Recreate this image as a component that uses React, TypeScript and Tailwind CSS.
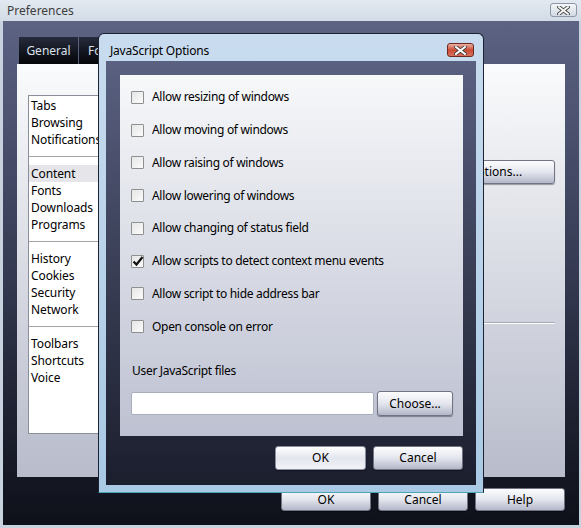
const font = "font-['Segoe_UI','Noto_Sans',sans-serif]";

const groups = [
  ["Tabs", "Browsing", "Notifications"],
  ["Content", "Fonts", "Downloads", "Programs"],
  ["History", "Cookies", "Security", "Network"],
  ["Toolbars", "Shortcuts", "Voice"],
];

const options = [
  { label: "Allow resizing of windows", checked: false },
  { label: "Allow moving of windows", checked: false },
  { label: "Allow raising of windows", checked: false },
  { label: "Allow lowering of windows", checked: false },
  { label: "Allow changing of status field", checked: false },
  { label: "Allow scripts to detect context menu events", checked: true },
  { label: "Allow script to hide address bar", checked: false },
  { label: "Open console on error", checked: false },
];

function Button({ label, className = "" }: { label: string; className?: string }) {
  return (
    <div
      className={`flex items-center justify-center rounded-[3px] border border-[#6f7383] bg-linear-to-b from-[#fdfdfe] via-[#e4e6ee] to-[#b3b7c8] text-[12px] text-black shadow-[0_1px_1px_rgba(0,0,0,0.35)] ${className}`}
    >
      {label}
    </div>
  );
}

function CloseGlyph({ color }: { color: string }) {
  return (
    <svg width="13" height="9" viewBox="0 0 13 9">
      <path d="M2 1 L11 8 M11 1 L2 8" stroke="#3a3a3a" strokeWidth="3.6" strokeLinecap="square" />
      <path d="M2 1 L11 8 M11 1 L2 8" stroke={color} strokeWidth="2" strokeLinecap="square" />
    </svg>
  );
}

function Checkbox({ checked }: { checked: boolean }) {
  return (
    <div className="relative h-[13px] w-[13px] shrink-0 rounded-[1px] border border-[#8e8f8f] bg-linear-to-br from-[#e6e6e6] to-[#fbfbfb]">
      {checked ? (
        <svg className="absolute -left-[1px] -top-[2px]" width="14" height="14" viewBox="0 0 14 14">
          <path d="M2.5 7.5 L5.5 10.5 L11.5 3" fill="none" stroke="#111" strokeWidth="2.2" />
        </svg>
      ) : null}
    </div>
  );
}

function JavaScriptDialog() {
  return (
    <div className="absolute left-[98px] top-[33px] flex h-[460px] w-[386px] flex-col rounded-t-[6px] border border-[#1c2232] border-b-[#4aa6b6] bg-linear-to-b from-[#c9dcef] to-[#a9c9e4]">
      <div className="relative flex h-[27px] items-center pl-[11px] pt-[6px] text-[12px] tracking-[-0.2px] text-black">
        JavaScript Options
        <div className="absolute right-[9px] top-[9px] flex h-[14px] w-[27px] items-center justify-center rounded-[3px] border border-[#6c2a20] bg-linear-to-b from-[#eab0a4] via-[#cc4a34] to-[#d9705e]">
          <CloseGlyph color="#ffffff" />
        </div>
      </div>
      <div className="mx-[7px] mb-[7px] flex flex-1 flex-col bg-linear-to-b from-[#5a6181] to-[#1b1e2d] pl-[14px] pr-[13px] pt-[14px]">
        <div className="flex h-[361px] flex-col bg-linear-to-b from-[#f7f8fa] to-[#bdc1d1] pl-[11px] pt-[6px]">
          {options.map((o) => (
            <div
              key={o.label}
              className="flex h-[32.75px] items-center gap-[8px] text-[12px] tracking-[-0.3px] text-black"
            >
              <Checkbox checked={o.checked} />
              <span>{o.label}</span>
            </div>
          ))}
          <div className="mt-[20px] pl-[1px] text-[12px] leading-[16px] tracking-[-0.3px] text-black">
            User JavaScript files
          </div>
          <div className="mt-[12px] flex items-center gap-[3px]">
            <div className="h-[23px] w-[243px] rounded-[2px] border border-[#a9aebd] bg-white" />
            <Button label="Choose..." className="h-[25px] w-[76px]" />
          </div>
        </div>
        <div className="mt-[10px] flex justify-end gap-[7px]">
          <Button label="OK" className="h-[24px] w-[91px] border-[#8a8ea0] from-[#ffffff] via-[#d8dae4] to-[#f2f3f7]" />
          <Button label="Cancel" className="h-[24px] w-[90px]" />
        </div>
      </div>
    </div>
  );
}

export default function App() {
  return (
    <div className={`relative flex h-[528px] w-[581px] flex-col overflow-hidden bg-[#c8d2de] ${font}`}>
      <div className="relative flex h-[21px] items-center bg-linear-to-b from-[#e3e9f0] to-[#d2dbe6] pl-[7px] text-[12px] text-[#3d3d3d]">
        Preferences
        <div className="absolute right-[4px] top-[3px] flex h-[14px] w-[27px] items-center justify-center rounded-[3px] border border-[#8d97a8] bg-linear-to-b from-[#f4f6f9] to-[#d3dae4]">
          <CloseGlyph color="#f4f4f4" />
        </div>
      </div>

      <div className="ml-[3px] mr-[2px] mb-[3px] flex flex-1 flex-col bg-linear-to-b from-[#5c6383] via-[#353a52] to-[#0e1019] px-[14px] pt-[16px]">
        <div className="flex h-[27px] gap-[1px] pl-[2px]">
          <div className="flex w-[59px] items-center justify-center bg-linear-to-b from-[#272b3c] to-[#050609] pt-[1px] text-[12px] text-[#dde0ea]">
            General
          </div>
          <div className="flex w-[70px] items-center bg-linear-to-b from-[#272b3c] to-[#050609] pl-[9px] pt-[1px] text-[12px] text-[#dde0ea]">
            Fo
          </div>
        </div>

        <div className="flex h-[413px] bg-linear-to-b from-[#fafbfc] to-[#b8bccb] pl-[11px] pt-[31px]">
          <div className="h-[339px] w-[74px] border border-[#8a8e98] bg-white pt-[1px] text-[12px] tracking-[-0.1px] text-black">
            {groups.map((g, gi) => (
              <div key={gi}>
                {gi > 0 ? (
                  <div className="flex h-[17px] items-center">
                    <div className="h-[1px] w-full bg-[#a4a4a8]" />
                  </div>
                ) : null}
                {g.map((item) => (
                  <div
                    key={item}
                    className={`h-[17px] pl-[2px] leading-[17px] ${item === "Content" ? "bg-[#e6e6ea]" : ""}`}
                  >
                    {item}
                  </div>
                ))}
              </div>
            ))}
          </div>
          <div className="flex flex-1 flex-col items-end pr-[10px] pt-[65px]">
            <Button label="Options..." className="h-[24px] w-[120px]" />
            <div className="mt-[138px] h-[2px] w-[400px] border-t border-b border-t-[#a6aab8] border-b-white" />
          </div>
        </div>

        <div className="mt-[11px] flex justify-end gap-[7px]">
          <Button label="OK" className="h-[23px] w-[90px]" />
          <Button label="Cancel" className="h-[23px] w-[90px]" />
          <Button label="Help" className="h-[23px] w-[90px]" />
        </div>
      </div>

      <JavaScriptDialog />
    </div>
  );
}
